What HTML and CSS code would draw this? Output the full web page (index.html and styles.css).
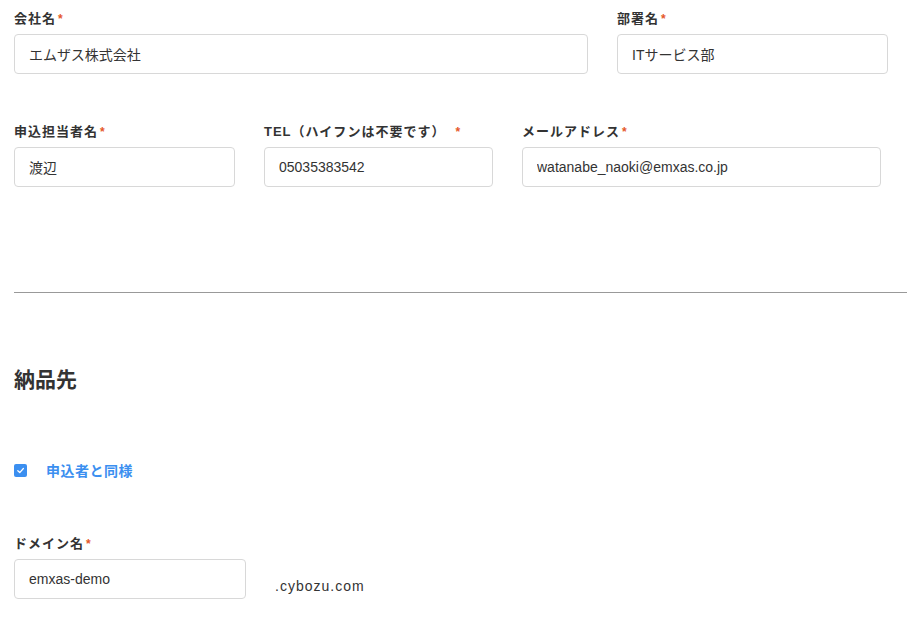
FILE: index.html
```html
<!DOCTYPE html>
<html lang="ja">
<head>
  <meta charset="UTF-8">
  <meta name="viewport" content="width=device-width, initial-scale=1.0">
  <title>申込フォーム</title>
  <link rel="stylesheet" href="styles.css">
</head>
<body>
  <div class="form">
    <div class="row row-company">
      <div class="field">
        <label class="label">会社名<span class="req">*</span></label>
        <input class="input" type="text" value="エムザス株式会社">
      </div>
      <div class="field">
        <label class="label">部署名<span class="req">*</span></label>
        <input class="input" type="text" value="ITサービス部">
      </div>
    </div>

    <div class="row row-contact">
      <div class="field">
        <label class="label">申込担当者名<span class="req">*</span></label>
        <input class="input" type="text" value="渡辺">
      </div>
      <div class="field">
        <label class="label">TEL（ハイフンは不要です）<span class="req req-wide">*</span></label>
        <input class="input" type="text" value="05035383542">
      </div>
      <div class="field">
        <label class="label">メールアドレス<span class="req">*</span></label>
        <input class="input" type="text" value="watanabe_naoki@emxas.co.jp">
      </div>
    </div>

    <hr class="divider">

    <h2 class="section-title">納品先</h2>

    <label class="check">
      <span class="check-box">
        <svg width="9" height="9" viewBox="0 0 10 10"><path d="M2 5.2 L4.2 7.3 L8.2 2.8" fill="none" stroke="#fff" stroke-width="1.4" stroke-linecap="round" stroke-linejoin="round"/></svg>
      </span>
      <span class="check-text">申込者と同様</span>
    </label>

    <div class="row row-domain">
      <div class="field">
        <label class="label">ドメイン名<span class="req">*</span></label>
        <input class="input" type="text" value="emxas-demo">
      </div>
      <span class="suffix">.cybozu.com</span>
    </div>
  </div>
</body>
</html>
```

FILE: styles.css
```css
* {
  box-sizing: border-box;
}

body {
  margin: 0;
  padding: 9px 0 0 14px;
  background-color: #fff;
  color: #333;
  font-family: "Liberation Sans", "Noto Sans CJK JP", sans-serif;
}

.row {
  display: flex;
  gap: 29px;
}

.row-company {
  margin-bottom: 48px;
}

.row-company .field:nth-child(1) { width: 574px; }
.row-company .field:nth-child(2) { width: 271px; }

.row-contact .field:nth-child(1) { width: 221px; }
.row-contact .field:nth-child(2) { width: 229px; }
.row-contact .field:nth-child(3) { width: 359px; }

.label {
  display: block;
  height: 20px;
  margin-bottom: 5px;
  font-size: 13px;
  font-weight: bold;
  line-height: 20px;
  color: #333;
  letter-spacing: 1px;
}

.req {
  margin-left: 2px;
  color: #e5582a;
  font-size: 12px;
}

.req-wide {
  margin-left: 10px;
}

.input {
  display: block;
  width: 100%;
  height: 40px;
  padding: 0 14px;
  border: 1px solid #d8d8d8;
  border-radius: 4px;
  background: #fff;
  font-family: inherit;
  font-size: 14px;
  color: #333;
}

.divider {
  margin: 105px 0 0;
  border: none;
  border-top: 1px solid #999;
}

.section-title {
  margin: 73px 0 0;
  font-size: 21px;
  line-height: 28px;
  font-weight: bold;
  color: #333;
}

.check {
  display: flex;
  align-items: center;
  gap: 19px;
  margin-top: 66px;
}

.check-box {
  display: flex;
  align-items: center;
  justify-content: center;
  width: 13px;
  height: 13px;
  border-radius: 2px;
  background-color: #3b8ff0;
}

.check-text {
  font-size: 14px;
  font-weight: bold;
  color: #3b8ff0;
  letter-spacing: 0.5px;
}

.row-domain {
  margin-top: 54px;
  align-items: flex-end;
}

.row-domain .field {
  width: 232px;
}

.suffix {
  margin-bottom: 5px;
  font-size: 14px;
  letter-spacing: 1px;
  color: #333;
}
```
